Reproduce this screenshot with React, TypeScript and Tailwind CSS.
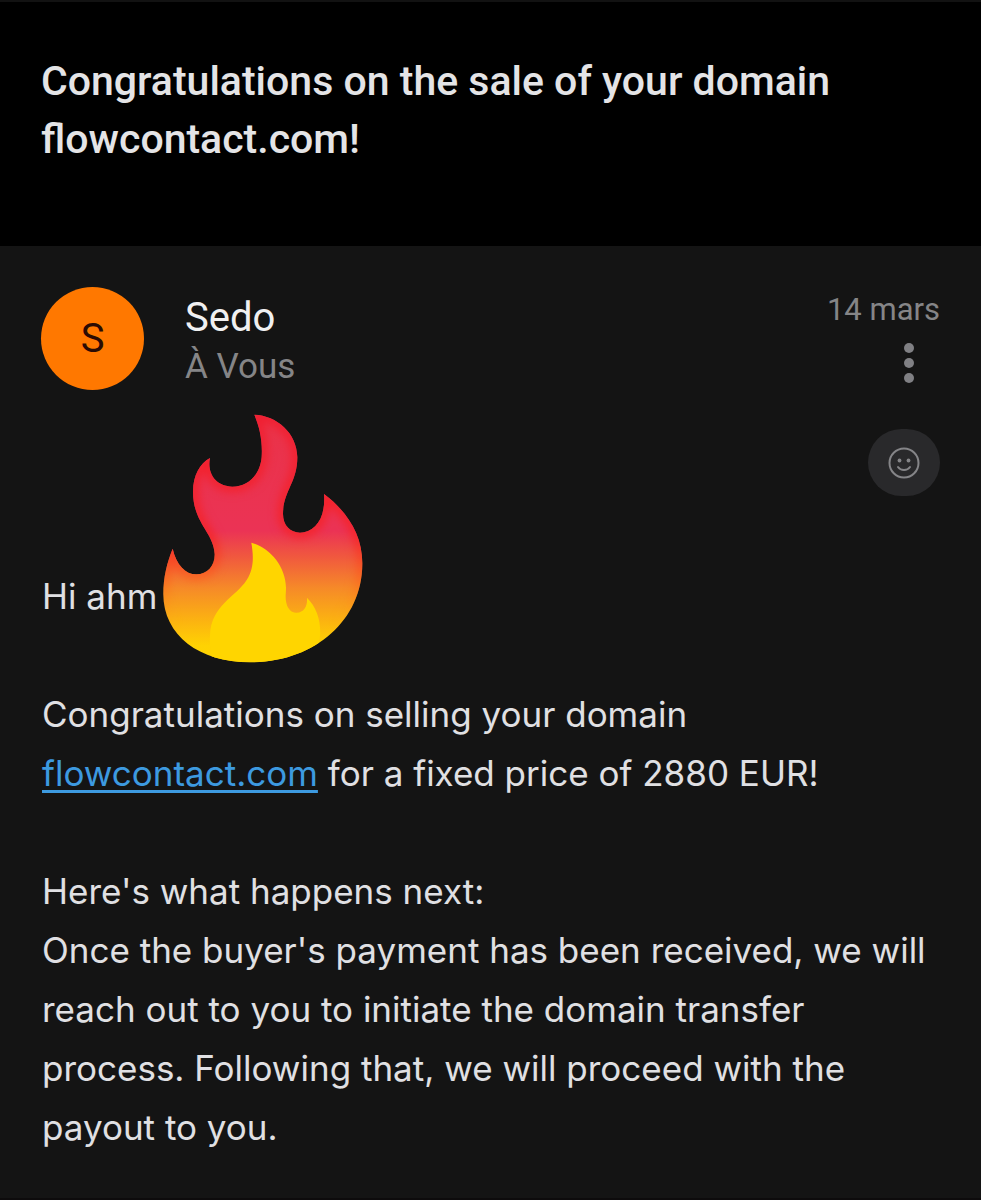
function Flame() {
  return (
    <svg
      className="ml-1.5 h-[249px] w-[200px] shrink-0"
      viewBox="39 42 600 747"
      role="img"
      aria-label="Fire"
    >
      <defs>
        <linearGradient id="outer" gradientUnits="userSpaceOnUse" x1="0" y1="42" x2="0" y2="789">
          <stop offset="0" stopColor="#ea3348" />
          <stop offset="0.47" stopColor="#eb3355" />
          <stop offset="0.57" stopColor="#f0573f" />
          <stop offset="0.7" stopColor="#f68a28" />
          <stop offset="0.84" stopColor="#fcb60f" />
          <stop offset="0.93" stopColor="#ffd203" />
          <stop offset="1" stopColor="#ffd500" />
        </linearGradient>
        <linearGradient id="rim" gradientUnits="userSpaceOnUse" x1="0" y1="42" x2="0" y2="789">
          <stop offset="0" stopColor="#f01e30" />
          <stop offset="0.5" stopColor="#f52428" />
          <stop offset="0.68" stopColor="#fb6a1c" stopOpacity="0.8" />
          <stop offset="0.85" stopColor="#ffb010" stopOpacity="0" />
        </linearGradient>
        <filter id="soft" x="-10%" y="-10%" width="120%" height="120%" colorInterpolationFilters="sRGB">
          <feGaussianBlur stdDeviation="14" />
        </filter>
        <path
          id="body"
          d="M313 44C380 47 441 98 442 172C442 248 399 274 399 342C399 376 421 398 450 398C493 398 528 357 522 282C590 333 638 404 637 492C636 664 491 787 300 787C148 787 40 706 40 582C40 532 51 488 68 446C79 494 106 523 139 523C173 523 195 496 194 462C191 397 129 369 129 275C129 226 150 190 180 174C170 220 198 260 247 260C296 260 331 222 335 171C338 124 329 82 313 44Z"
        />
        <clipPath id="bodyClip">
          <use href="#body" />
        </clipPath>
      </defs>
      <use href="#body" fill="url(#outer)" />
      <g clipPath="url(#bodyClip)">
        <use href="#body" fill="none" stroke="url(#rim)" strokeWidth="30" filter="url(#soft)" />
        <path
          fill="#ffd500"
          d="M304 428C359 443 407 498 408 563C408 580 405 592 409 608C413 627 425 639 440 638C463 637 473 617 471 593C497 620 511 652 511 700L500 789H190C183 770 178 735 180 706C184 614 257 592 290 540C312 506 311 469 304 428Z"
        />
      </g>
    </svg>
  );
}

function Smiley() {
  return (
    <svg className="size-8" viewBox="0 0 32 32" fill="none" stroke="#858588" strokeWidth="2" strokeLinecap="round" aria-hidden="true">
      <circle cx="16" cy="16" r="14.5" />
      <circle cx="11.5" cy="13.5" r="1.9" fill="#858588" stroke="none" />
      <circle cx="20.5" cy="13.5" r="1.9" fill="#858588" stroke="none" />
      <path d="M10 20C12.8 24 19.2 24 22 20" />
    </svg>
  );
}

export default function App() {
  return (
    <main className="flex min-h-screen flex-col border-b-2 border-[#0d0b0c] bg-[#141414] font-['Roboto',sans-serif]">
      <header className="border-t-2 border-[#121212] bg-black px-[41px] pt-[50px] pb-[78px]">
        <h1 className="text-[41px] leading-[58px] font-medium text-[#e4e4e6]">
          Congratulations on the sale of your domain flowcontact.com!
        </h1>
      </header>

      <article className="px-[41px] pt-[41px]">
        <div className="flex items-start">
          <div className="flex size-[103px] shrink-0 items-center justify-center rounded-full bg-[#ff7800] text-[40px] text-[#2a0b04]">
            S
          </div>
          <div className="ml-[41px] flex-1 pt-[5px]">
            <h2 className="text-[40px] leading-[52px] text-[#f0f0f1]">Sedo</h2>
            <p className="text-[35px] leading-[46px] text-[#858587]">À Vous</p>
          </div>
          <div className="flex flex-col items-end">
            <time className="text-[31px] leading-[46px] text-[#858587]">14 mars</time>
            <button
              type="button"
              aria-label="More options"
              className="mr-[7px] flex w-12 flex-col items-center gap-[5px] pt-2.5 pb-1"
            >
              <span className="size-2.5 rounded-full bg-[#808084]" />
              <span className="size-2.5 rounded-full bg-[#808084]" />
              <span className="size-2.5 rounded-full bg-[#808084]" />
            </button>
          </div>
        </div>

        <div className="mt-6 flex items-start justify-between">
          <div className="flex items-end pl-px font-['Inter',sans-serif] text-[35px] text-[#e0e0e3]">
            <p className="mb-[37px] leading-[59px]">Hi ahm</p>
            <Flame />
          </div>
          <button
            type="button"
            aria-label="Add a reaction"
            className="mt-[15px] flex h-[67px] w-[72px] items-center justify-center rounded-full bg-[#29292b]"
          >
            <Smiley />
          </button>
        </div>

        <div className="mt-[22px] flex flex-col gap-[59px] pl-px font-['Inter',sans-serif] text-[35px] leading-[59px] text-[#e0e0e3]">
          <p>
            Congratulations on selling your domain
            <br />
            <a href="#domain" className="text-[#3d9ae0] underline decoration-[3px] underline-offset-4">
              flowcontact.com
            </a>{" "}
            for a fixed price of 2880 EUR!
          </p>
          <p>
            Here's what happens next:
            <br />
            Once the buyer's payment has been received, we will reach out to you to initiate the domain transfer
            process. Following that, we will proceed with the payout to you.
          </p>
        </div>
      </article>
    </main>
  );
}
